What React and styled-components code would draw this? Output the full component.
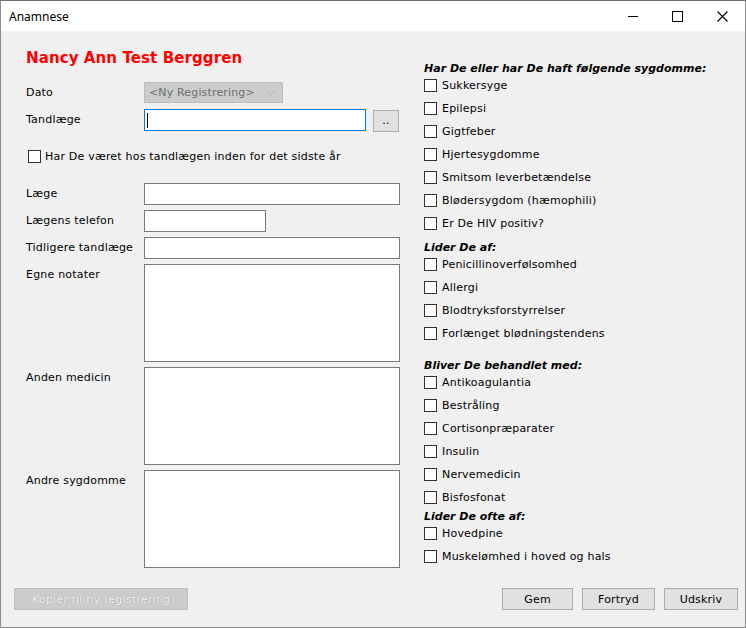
import React from "react";
import styled, { createGlobalStyle } from "styled-components";

const GlobalStyle = createGlobalStyle`
  html, body {
    margin: 0;
    padding: 0;
    background: #f0f0f0;
  }
  * {
    box-sizing: border-box;
  }
`;

const sygdomme = [
  "Sukkersyge",
  "Epilepsi",
  "Gigtfeber",
  "Hjertesygdomme",
  "Smitsom leverbetændelse",
  "Blødersygdom (hæmophili)",
  "Er De HIV positiv?",
];

const liderAf = [
  "Penicillinoverfølsomhed",
  "Allergi",
  "Blodtryksforstyrrelser",
  "Forlænget blødningstendens",
];

const behandletMed = [
  "Antikoagulantia",
  "Bestråling",
  "Cortisonpræparater",
  "Insulin",
  "Nervemedicin",
  "Bisfosfonat",
];

const ofteAf = ["Hovedpine", "Muskelømhed i hoved og hals"];

const groups = [
  { title: "Har De eller har De haft følgende sygdomme:", items: sygdomme, gap: 0 },
  { title: "Lider De af:", items: liderAf, gap: 4 },
  { title: "Bliver De behandlet med:", items: behandletMed, gap: 12 },
  { title: "Lider De ofte af:", items: ofteAf, gap: -1 },
];

export default function App() {
  return (
    <>
      <GlobalStyle />
      <Window>
        <TitleBar>
          <Title>Anamnese</Title>
          <Controls>
            <Control>
              <svg width="10" height="10" viewBox="0 0 10 10">
                <path d="M0 5.5h10" stroke="#000" strokeWidth="1" />
              </svg>
            </Control>
            <Control>
              <svg width="11" height="11" viewBox="0 0 11 11">
                <rect x="0.5" y="0.5" width="10" height="10" fill="none" stroke="#000" strokeWidth="1" />
              </svg>
            </Control>
            <Control>
              <svg width="11" height="11" viewBox="0 0 11 11">
                <path d="M0.5 0.5L10.5 10.5M10.5 0.5L0.5 10.5" stroke="#000" strokeWidth="1.1" />
              </svg>
            </Control>
          </Controls>
        </TitleBar>

        <Body>
          <Main>
            <LeftColumn>
              <PatientName>Nancy Ann Test Berggren</PatientName>

              <Form $gap={6}>
                <Label>Dato</Label>
                <Select>
                  <span>&lt;Ny Registrering&gt;</span>
                  <svg width="10" height="6" viewBox="0 0 10 6">
                    <path d="M0.5 0.5L5 5L9.5 0.5" fill="none" stroke="#b4b4b4" strokeWidth="1" />
                  </svg>
                </Select>

                <Label>Tandlæge</Label>
                <FieldRow>
                  <Input $width={222} $focused>
                    <Caret />
                  </Input>
                  <SmallButton>..</SmallButton>
                </FieldRow>
              </Form>

              <CheckRow $top={18}>
                <Box />
                <span>Har De været hos tandlægen inden for det sidste år</span>
              </CheckRow>

              <Form $gap={5} $top={20}>
                <Label>Læge</Label>
                <Input $width={256} />

                <Label>Lægens telefon</Label>
                <Input $width={122} />

                <Label>Tidligere tandlæge</Label>
                <Input $width={256} />

                <Label>Egne notater</Label>
                <TextArea />

                <Label>Anden medicin</Label>
                <TextArea />

                <Label>Andre sygdomme</Label>
                <TextArea />
              </Form>
            </LeftColumn>

            <RightColumn>
              {groups.map((group) => (
                <Group key={group.title} $gap={group.gap}>
                  <GroupTitle>{group.title}</GroupTitle>
                  {group.items.map((item) => (
                    <Item key={item}>
                      <Box />
                      <span>{item}</span>
                    </Item>
                  ))}
                </Group>
              ))}
            </RightColumn>
          </Main>

          <Footer>
            <DisabledButton>Kopiér til ny registrering</DisabledButton>
            <Actions>
              <Button $width={71}>Gem</Button>
              <Button $width={73}>Fortryd</Button>
              <Button $width={74}>Udskriv</Button>
            </Actions>
          </Footer>
        </Body>
      </Window>
    </>
  );
}

const Window = styled.div`
  width: 746px;
  height: 628px;
  display: flex;
  flex-direction: column;
  border: 1px solid #8c8c8c;
  border-top-color: #6b6b6b;
  background: #f0f0f0;
  font-family: "DejaVu Sans", Verdana, sans-serif;
  font-size: 11px;
  letter-spacing: 0.2px;
  color: #000;
  overflow: hidden;
`;

const TitleBar = styled.div`
  height: 30px;
  flex: none;
  display: flex;
  align-items: center;
  justify-content: space-between;
  background: #fff;
`;

const Title = styled.span`
  padding-left: 8px;
  font-family: "Noto Sans", "Open Sans", sans-serif;
  font-size: 12px;
  letter-spacing: 0;
  color: #000;
`;

const Controls = styled.div`
  display: flex;
  height: 100%;
`;

const Control = styled.div`
  width: 45px;
  height: 100%;
  display: flex;
  align-items: center;
  justify-content: center;
`;

const Body = styled.div`
  flex: 1;
  display: flex;
  flex-direction: column;
`;

const Main = styled.div`
  display: flex;
  padding-left: 25px;
  gap: 26px;
`;

const LeftColumn = styled.div`
  width: 373px;
  display: flex;
  flex-direction: column;
  padding-top: 18px;
`;

const PatientName = styled.div`
  color: #ff0000;
  font-weight: bold;
  font-size: 15px;
  line-height: 18px;
  letter-spacing: 0.1px;
  margin-bottom: 15px;
`;

const Form = styled.div`
  display: grid;
  grid-template-columns: 118px 1fr;
  row-gap: ${(p) => p.$gap}px;
  align-items: start;
  margin-top: ${(p) => p.$top || 0}px;
`;

const Label = styled.div`
  line-height: 21px;
  white-space: nowrap;
`;

const FieldRow = styled.div`
  display: flex;
  align-items: flex-start;
  gap: 7px;
`;

const Select = styled.div`
  width: 139px;
  height: 21px;
  display: flex;
  align-items: center;
  justify-content: space-between;
  padding: 0 6px 0 4px;
  background: #cccccc;
  border: 1px solid #bcbcbc;
  color: #6f6f6f;
  font-size: 11px;
  letter-spacing: 0.15px;
`;

const Input = styled.div`
  width: ${(p) => p.$width}px;
  height: 22px;
  display: flex;
  align-items: center;
  padding-left: 2px;
  background: #fff;
  border: 1px solid ${(p) => (p.$focused ? "#0078d7" : "#7a7a7a")};
`;

const Caret = styled.div`
  width: 1px;
  height: 15px;
  background: #000;
`;

const SmallButton = styled.div`
  width: 26px;
  height: 22px;
  margin-top: 1px;
  display: flex;
  align-items: flex-end;
  justify-content: center;
  padding-bottom: 5px;
  line-height: 1;
  background: #e1e1e1;
  border: 1px solid #adadad;
`;

const TextArea = styled.div`
  width: 256px;
  height: 98px;
  background: #fff;
  border: 1px solid #7a7a7a;
`;

const Box = styled.div`
  width: 13px;
  height: 13px;
  flex: none;
  background: #fff;
  border: 1px solid #333;
`;

const CheckRow = styled.label`
  display: flex;
  align-items: center;
  gap: 4px;
  padding-left: 2px;
  margin-top: ${(p) => p.$top}px;
  line-height: 13px;
`;

const RightColumn = styled.div`
  flex: 1;
  display: flex;
  flex-direction: column;
  padding-top: 31px;
  margin-left: -1px;
`;

const Group = styled.div`
  display: flex;
  flex-direction: column;
  margin-top: ${(p) => p.$gap}px;
`;

const GroupTitle = styled.div`
  font-weight: bold;
  font-style: italic;
  letter-spacing: 0;
  line-height: 14px;
`;

const Item = styled.label`
  height: 23px;
  display: flex;
  align-items: flex-start;
  gap: 5px;
  padding-top: 3px;
  line-height: 13px;
`;

const Footer = styled.div`
  margin-top: auto;
  display: flex;
  justify-content: space-between;
  align-items: center;
  padding: 0 7px 17px 13px;
`;

const Actions = styled.div`
  display: flex;
  gap: 9px;
`;

const Button = styled.div`
  width: ${(p) => p.$width}px;
  height: 22px;
  display: flex;
  align-items: center;
  justify-content: center;
  background: #e1e1e1;
  border: 1px solid #adadad;
`;

const DisabledButton = styled.div`
  width: 174px;
  height: 22px;
  display: flex;
  align-items: center;
  justify-content: center;
  background: #cccccc;
  border: 1px solid #bfbfbf;
  color: #f4f4f4;
  text-shadow: 0 0 1px #8a8a8a;
`;
